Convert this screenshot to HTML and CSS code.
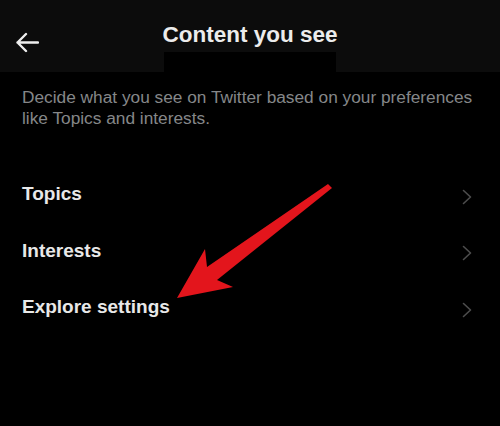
FILE: index.html
```html
<!DOCTYPE html>
<html lang="en">
<head>
<meta charset="utf-8">
<title>Content you see</title>
<link rel="stylesheet" href="styles.css">
</head>
<body>
<div class="page">
  <header class="header">
    <div class="back">
      <svg width="24" height="24" viewBox="0 0 24 24" fill="none" stroke="#eeeeee" stroke-width="2.4" stroke-linecap="round" stroke-linejoin="round"><path d="M23 11.5H2.5M11 3L2.5 11.5L11 20"/></svg>
    </div>
    <div class="center">
      <h1 class="title">Content you see</h1>
      <div class="redact"></div>
    </div>
    <div></div>
  </header>
  <p class="desc">Decide what you see on Twitter based on your preferences like Topics and interests.</p>
  <ul class="list">
    <li class="row"><span class="label">Topics</span><svg class="chev" width="10" height="16" viewBox="0 0 10 16" fill="none" stroke="#4d4d4d" stroke-width="1.6" stroke-linecap="round" stroke-linejoin="round"><path d="M1.5 1.5L8.5 8L1.5 14.5"/></svg></li>
    <li class="row"><span class="label">Interests</span><svg class="chev" width="10" height="16" viewBox="0 0 10 16" fill="none" stroke="#4d4d4d" stroke-width="1.6" stroke-linecap="round" stroke-linejoin="round"><path d="M1.5 1.5L8.5 8L1.5 14.5"/></svg></li>
    <li class="row"><span class="label">Explore settings</span><svg class="chev" width="10" height="16" viewBox="0 0 10 16" fill="none" stroke="#4d4d4d" stroke-width="1.6" stroke-linecap="round" stroke-linejoin="round"><path d="M1.5 1.5L8.5 8L1.5 14.5"/></svg></li>
  </ul>
  <svg class="annot" width="500" height="426" viewBox="0 0 500 426"><polygon fill="#e3151c" points="177,298 205,249 207,267 328,184 332,188 217,280 233,287"/></svg>
</div>
</body>
</html>
```
FILE: styles.css
```css
html, body {
  margin: 0;
  padding: 0;
  background: #000;
}
.page {
  position: relative;
  width: 500px;
  height: 426px;
  overflow: hidden;
  background: #000;
  font-family: "Liberation Sans", Arial, sans-serif;
}
.header {
  display: grid;
  grid-template-columns: 1fr auto 1fr;
  height: 72px;
  background: #0c0c0c;
}
.back {
  padding-left: 15px;
  padding-top: 31px;
}
.back svg {
  display: block;
}
.center {
  display: flex;
  flex-direction: column;
  align-items: center;
  padding-top: 21px;
}
.title {
  margin: 0;
  font-size: 22.5px;
  line-height: 27px;
  font-weight: 700;
  color: #ececec;
}
.redact {
  width: 172px;
  height: 20px;
  margin-top: 4px;
  background: #000;
}
.desc {
  margin: 0;
  padding: 15px 22px 0 22px;
  font-size: 17.3px;
  line-height: 21px;
  color: #858789;
}
.list {
  list-style: none;
  margin: 37px 0 0 0;
  padding: 0;
}
.row {
  display: flex;
  align-items: center;
  justify-content: space-between;
  height: 56.5px;
  padding: 0 28px 0 22px;
}
.label {
  font-size: 19px;
  font-weight: 700;
  color: #e8e8e8;
}
.chev {
  display: block;
  margin-top: 5px;
}
.annot {
  position: absolute;
  left: 0;
  top: 0;
  pointer-events: none;
}
```
